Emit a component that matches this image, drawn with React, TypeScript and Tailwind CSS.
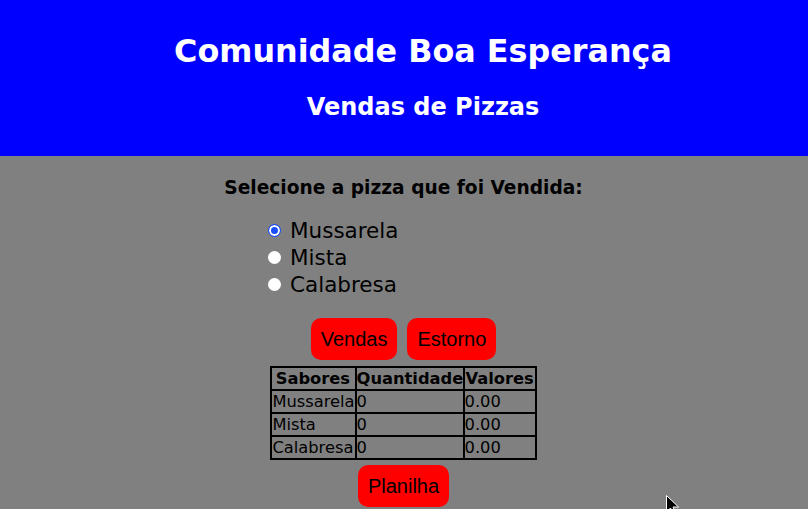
import React, { useState } from 'react';

const sabores = ['Mussarela', 'Mista', 'Calabresa'];

const App: React.FC = () => {
  const [selected, setSelected] = useState('Mussarela');

  return (
    <div className="relative min-h-[509px] bg-[#808080] font-['DejaVu_Sans',Verdana,sans-serif] text-black">
      <header className="bg-[#0000ff] pl-[38px] pt-[32px] pb-[35px] text-center text-white">
        <h1 className="text-[31.8px] font-bold leading-[37px]">Comunidade Boa Esperança</h1>
        <h2 className="mt-[24px] text-[24px] font-bold leading-[28px]">Vendas de Pizzas</h2>
      </header>

      <main className="flex flex-col items-center pt-[21px] pr-[1px]">
        <p className="text-[18.6px] font-bold leading-[21px]">Selecione a pizza que foi Vendida:</p>

        <div className="mt-[19px] flex w-[271px] flex-col">
          {sabores.map(s => (
            <label key={s} className="flex h-[27px] items-center text-[21.5px] leading-[27px]">
              <input
                type="radio"
                name="pizza"
                checked={selected === s}
                onChange={() => setSelected(s)}
                className="mr-[9px] h-[13px] w-[13px] appearance-none rounded-full bg-white checked:border checked:border-[#1a4dff] checked:bg-[#1a4dff] checked:shadow-[inset_0_0_0_2px_white]"
              />
              {s}
            </label>
          ))}
        </div>

        <div className="mt-[20px] flex gap-[10px] font-['Liberation_Sans',Arial,sans-serif]">
          <button className="h-[42px] rounded-[10px] bg-[#ff0000] px-[10px] text-[20px]">Vendas</button>
          <button className="h-[42px] rounded-[10px] bg-[#ff0000] px-[10px] text-[20px]">Estorno</button>
        </div>

        <table className="mt-[6px] border-collapse border-2 border-black text-[16.3px] leading-[19px]">
          <thead>
            <tr>
              <th className="border-2 border-black p-0 py-px">
                <div className="w-[81px]">Sabores</div>
              </th>
              <th className="border-2 border-black p-0 py-px">
                <div className="w-[106px]">Quantidade</div>
              </th>
              <th className="border-2 border-black p-0 py-px">
                <div className="w-[70px]">Valores</div>
              </th>
            </tr>
          </thead>
          <tbody>
            {sabores.map(s => (
              <tr key={s}>
                <td className="border-2 border-black px-0 py-px">{s}</td>
                <td className="border-2 border-black px-0 py-px">0</td>
                <td className="border-2 border-black px-0 py-px">0.00</td>
              </tr>
            ))}
          </tbody>
        </table>

        <button className="mt-[5px] h-[42px] rounded-[10px] bg-[#ff0000] px-[10px] font-['Liberation_Sans',Arial,sans-serif] text-[20px]">
          Planilha
        </button>
      </main>

      <svg className="absolute left-[666px] top-[495px]" width="14" height="22" viewBox="0 0 14 22">
        <path d="M0.5 0.5 L0.5 17 L4.5 13 L7.5 20 L10 19 L7 12 L12.5 12 Z" fill="black" stroke="white" strokeWidth="1" />
      </svg>
    </div>
  );
};

export default App;
